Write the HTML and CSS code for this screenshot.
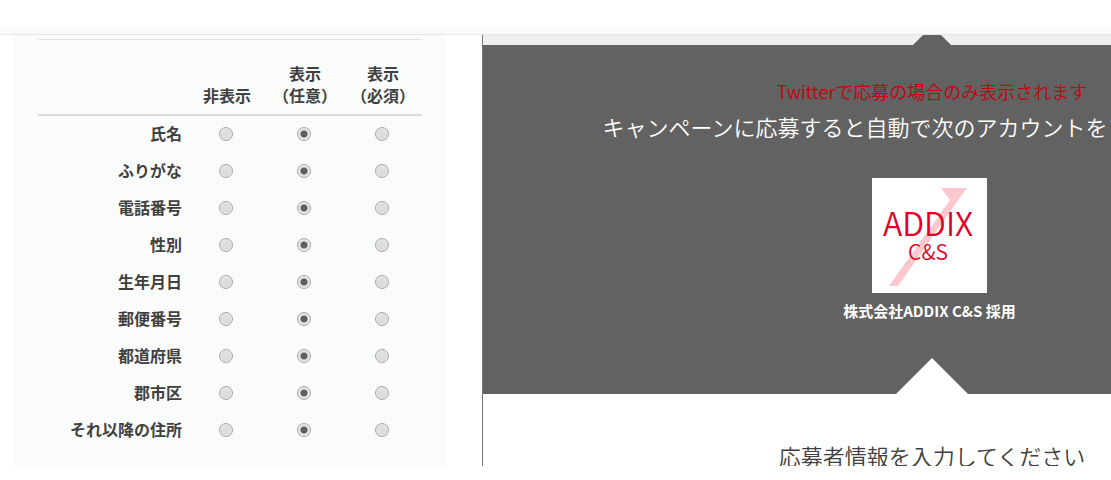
FILE: index.html
```html
<!DOCTYPE html>
<html lang="ja">
<head>
<meta charset="utf-8">
<meta name="viewport" content="width=device-width, initial-scale=1">
<title>応募者情報</title>
<link rel="stylesheet" href="styles.css">
</head>
<body>
<header class="topbar"></header>
<main class="workspace">
  <section class="settings">
    <form class="panel">
      <table class="fields">
        <thead>
          <tr><td></td><th scope="col" id="c0">非表示</th><th scope="col" id="c1">表示<br>（任意）</th><th scope="col" id="c2">表示<br>（必須）</th></tr>
        </thead>
        <tbody>
          <tr><th scope="row" id="r1">氏名</th><td><input type="radio" name="name" aria-labelledby="r1 c0"></td><td><input type="radio" name="name" aria-labelledby="r1 c1" checked></td><td><input type="radio" name="name" aria-labelledby="r1 c2"></td></tr>
          <tr><th scope="row" id="r2">ふりがな</th><td><input type="radio" name="kana" aria-labelledby="r2 c0"></td><td><input type="radio" name="kana" aria-labelledby="r2 c1" checked></td><td><input type="radio" name="kana" aria-labelledby="r2 c2"></td></tr>
          <tr><th scope="row" id="r3">電話番号</th><td><input type="radio" name="tel" aria-labelledby="r3 c0"></td><td><input type="radio" name="tel" aria-labelledby="r3 c1" checked></td><td><input type="radio" name="tel" aria-labelledby="r3 c2"></td></tr>
          <tr><th scope="row" id="r4">性別</th><td><input type="radio" name="sex" aria-labelledby="r4 c0"></td><td><input type="radio" name="sex" aria-labelledby="r4 c1" checked></td><td><input type="radio" name="sex" aria-labelledby="r4 c2"></td></tr>
          <tr><th scope="row" id="r5">生年月日</th><td><input type="radio" name="birth" aria-labelledby="r5 c0"></td><td><input type="radio" name="birth" aria-labelledby="r5 c1" checked></td><td><input type="radio" name="birth" aria-labelledby="r5 c2"></td></tr>
          <tr><th scope="row" id="r6">郵便番号</th><td><input type="radio" name="zip" aria-labelledby="r6 c0"></td><td><input type="radio" name="zip" aria-labelledby="r6 c1" checked></td><td><input type="radio" name="zip" aria-labelledby="r6 c2"></td></tr>
          <tr><th scope="row" id="r7">都道府県</th><td><input type="radio" name="pref" aria-labelledby="r7 c0"></td><td><input type="radio" name="pref" aria-labelledby="r7 c1" checked></td><td><input type="radio" name="pref" aria-labelledby="r7 c2"></td></tr>
          <tr><th scope="row" id="r8">郡市区</th><td><input type="radio" name="city" aria-labelledby="r8 c0"></td><td><input type="radio" name="city" aria-labelledby="r8 c1" checked></td><td><input type="radio" name="city" aria-labelledby="r8 c2"></td></tr>
          <tr><th scope="row" id="r9">それ以降の住所</th><td><input type="radio" name="addr" aria-labelledby="r9 c0"></td><td><input type="radio" name="addr" aria-labelledby="r9 c1" checked></td><td><input type="radio" name="addr" aria-labelledby="r9 c2"></td></tr>
        </tbody>
      </table>
    </form>
  </section>
  <section class="preview">
    <div class="page">
      <div class="follow">
        <p class="note">Twitterで応募の場合のみ表示されます</p>
        <h2 class="title">キャンペーンに応募すると自動で次のアカウントをフォローします</h2>
        <figure class="account">
          <svg class="logo" viewBox="0 0 115 115" role="img" aria-label="ADDIX C&amp;S">
            <rect width="115" height="115" fill="#fff"/>
            <path d="M69 10H95L84 25L26 108H17L78 22Z" fill="#fbc8d0"/>
            <text class="logo-main" x="56" y="58">ADDIX</text>
            <text class="logo-sub" x="56" y="82">C&amp;S</text>
          </svg>
          <figcaption class="caption">株式会社ADDIX C&amp;S 採用</figcaption>
        </figure>
      </div>
      <h2 class="entry">応募者情報を入力してください</h2>
    </div>
  </section>
</main>
<footer class="bottombar"></footer>
</body>
</html>
```
FILE: styles.css
```css
* { box-sizing: border-box; }

body {
  margin: 0;
  height: 100vh;
  display: flex;
  flex-direction: column;
  background: #fff;
  color: #404040;
  font-family: "Noto Sans CJK JP", sans-serif;
  font-size: 16px;
  line-height: 22px;
}

.topbar {
  flex: none;
  height: 35px;
  background: linear-gradient(#fff 70%, #f9fafa);
  border-bottom: 1px solid #e4e7e6;
}

.workspace {
  flex: 1;
  min-height: 0;
  display: flex;
  overflow: hidden;
}

.bottombar {
  flex: none;
  height: 14px;
}

.settings {
  flex: none;
  width: 482px;
  padding: 0 36px 0 14px;
}

.panel {
  min-height: 100%;
  padding: 4px 24px 0;
  background: #fafcfb;
}

.fields {
  width: 100%;
  table-layout: fixed;
  border-collapse: separate;
  border-spacing: 0;
  border-top: 1px solid #e0e5e2;
}

.fields th,
.fields td {
  padding: 0;
  height: 37px;
  text-align: center;
  vertical-align: middle;
  white-space: nowrap;
}

.fields thead th,
.fields thead td {
  width: 78px;
  height: 76px;
  padding-bottom: 8px;
  vertical-align: bottom;
  border-bottom: 2px solid #dadddb;
}

.fields thead td { width: auto; }

.fields tbody td { padding: 0 2px 2px 0; }

.fields tbody th {
  padding: 0 6px 4px 0;
  text-align: right;
}

.fields input {
  appearance: none;
  display: block;
  width: 14px;
  height: 14px;
  margin: 0 auto;
  border: 1px solid #a6a6a6;
  border-radius: 50%;
  background: linear-gradient(#e2e2e2, #d8d8d8);
  box-shadow: inset 0 0 1px 1px #e8e8e8;
}

.fields input:checked {
  background: radial-gradient(circle, #606060 3px, #e3e3e3 4px);
}

.preview {
  flex: 1;
  min-width: 0;
  overflow: hidden;
  border-left: 1px solid #777;
}

.page {
  min-width: 898px;
  border-top: 10px solid #eee;
  text-align: center;
}

.follow {
  position: relative;
  padding: 35px 0 72px;
  background: #626262;
  color: #fff;
}

.follow::before,
.follow::after {
  content: "";
  position: absolute;
  left: 50%;
  transform: translateX(-50%);
  clip-path: polygon(50% 0, 100% 100%, 0 100%);
}

.follow::before {
  bottom: 100%;
  width: 38px;
  height: 19px;
  background: #626262;
}

.follow::after {
  bottom: 0;
  width: 72px;
  height: 36px;
  background: #fff;
}

.note {
  margin: 0;
  color: #c7000b;
  font-size: 18px;
  font-weight: 350;
  line-height: 22px;
}

.title,
.entry {
  margin: 0;
  font-size: 22px;
  font-weight: 350;
  line-height: 32px;
}

.title { padding-top: 8px; }

.account {
  margin: 36px 0 0;
  padding-right: 5px;
}

.logo {
  display: block;
  width: 115px;
  height: 115px;
  margin: 0 auto;
}

.logo text {
  fill: #e60026;
  font-family: "Noto Sans CJK JP", sans-serif;
  font-weight: 350;
  text-anchor: middle;
}

.logo-main { font-size: 32px; }
.logo-sub { font-size: 21px; }

.caption {
  padding-top: 7px;
  font-size: 15px;
  font-weight: 700;
  line-height: 22px;
}

.entry { padding-top: 45px; }
```
